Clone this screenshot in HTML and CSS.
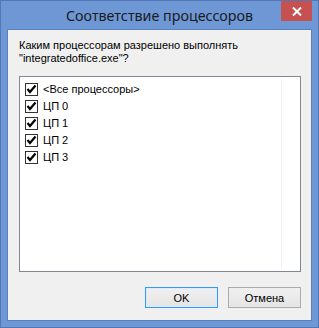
FILE: index.html
```html
<!DOCTYPE html>
<html lang="ru">
<head>
<meta charset="utf-8">
<link rel="stylesheet" href="styles.css">
</head>
<body>
<div class="window">
  <div class="titlebar">
    <div class="title">Соответствие процессоров</div>
    <div class="close">
      <svg width="10" height="9" viewBox="0 0 10 9"><path d="M1 0.5 L9 8.5 M9 0.5 L1 8.5" stroke="#fff" stroke-width="2" fill="none"/></svg>
    </div>
  </div>
  <div class="client">
    <div class="prompt">Каким процессорам разрешено выполнять<br>"integratedoffice.exe"?</div>
    <div class="list">
      <div class="row"><span class="cb"><svg width="11" height="11" viewBox="0 0 11 11"><path d="M1.5 5 L4 8 L9.5 1.5" stroke="#000" stroke-width="2.2" fill="none"/></svg></span><span>&lt;Все процессоры&gt;</span></div>
      <div class="row"><span class="cb"><svg width="11" height="11" viewBox="0 0 11 11"><path d="M1.5 5 L4 8 L9.5 1.5" stroke="#000" stroke-width="2.2" fill="none"/></svg></span><span>ЦП 0</span></div>
      <div class="row"><span class="cb"><svg width="11" height="11" viewBox="0 0 11 11"><path d="M1.5 5 L4 8 L9.5 1.5" stroke="#000" stroke-width="2.2" fill="none"/></svg></span><span>ЦП 1</span></div>
      <div class="row"><span class="cb"><svg width="11" height="11" viewBox="0 0 11 11"><path d="M1.5 5 L4 8 L9.5 1.5" stroke="#000" stroke-width="2.2" fill="none"/></svg></span><span>ЦП 2</span></div>
      <div class="row"><span class="cb"><svg width="11" height="11" viewBox="0 0 11 11"><path d="M1.5 5 L4 8 L9.5 1.5" stroke="#000" stroke-width="2.2" fill="none"/></svg></span><span>ЦП 3</span></div>
      <div class="sep"></div>
    </div>
    <div class="buttons">
      <button class="btn default">OK</button>
      <button class="btn">Отмена</button>
    </div>
  </div>
</div>
</body>
</html>
```

FILE: styles.css
```css
html, body {
  margin: 0;
  padding: 0;
  background: #fff;
}
.window {
  box-sizing: border-box;
  width: 319px;
  height: 328px;
  border: 1px solid #5277b3;
  background: #6d97d5;
  padding: 0 6px 6px 6px;
  display: flex;
  flex-direction: column;
}
.titlebar {
  position: relative;
  height: 28px;
  flex: none;
}
.title {
  text-align: center;
  font-family: "Noto Sans", sans-serif;
  font-size: 14.3px;
  line-height: 29px;
  color: #1b1b1b;
  margin-left: -6px;
  margin-right: -6px;
}
.close {
  position: absolute;
  top: 0;
  right: 0;
  width: 31px;
  height: 20px;
  background: #c75050;
  display: flex;
  align-items: center;
  justify-content: center;
}
.client {
  flex: 1;
  border: 1px solid #5a80bd;
  background: #f0f0f0;
  padding: 9px 10px 12px 11px;
  display: flex;
  flex-direction: column;
  font-family: "Liberation Sans", Arial, sans-serif;
  font-size: 11px;
  color: #000;
}
.prompt {
  line-height: 13px;
}
.list {
  position: relative;
  margin-top: 11px;
  height: 196px;
  box-sizing: border-box;
  border: 1px solid #828790;
  background: #fff;
  padding: 6px 0 0 5px;
}
.sep {
  position: absolute;
  top: 2px;
  bottom: 2px;
  right: 18px;
  width: 1px;
  background: #eef2f7;
}
.row {
  height: 17px;
  display: flex;
  align-items: flex-start;
  line-height: 13px;
}
.cb {
  box-sizing: border-box;
  width: 13px;
  height: 13px;
  border: 1px solid #333;
  background: #fff;
  margin-right: 5px;
  display: flex;
  align-items: center;
  justify-content: center;
}
.cb svg { display: block; }
.buttons {
  margin-top: auto;
  display: flex;
  justify-content: flex-end;
  gap: 10px;
}
.btn {
  box-sizing: border-box;
  width: 73px;
  height: 21px;
  border: 1px solid #acacac;
  background: linear-gradient(#f0f0f0, #e5e5e5);
  font-family: "Liberation Sans", Arial, sans-serif;
  font-size: 11px;
  color: #000;
  padding: 0;
  margin: 0;
}
.btn.default {
  border-color: #3399ff;
  box-shadow: inset 0 0 0 1px #dcecfc;
}
```
